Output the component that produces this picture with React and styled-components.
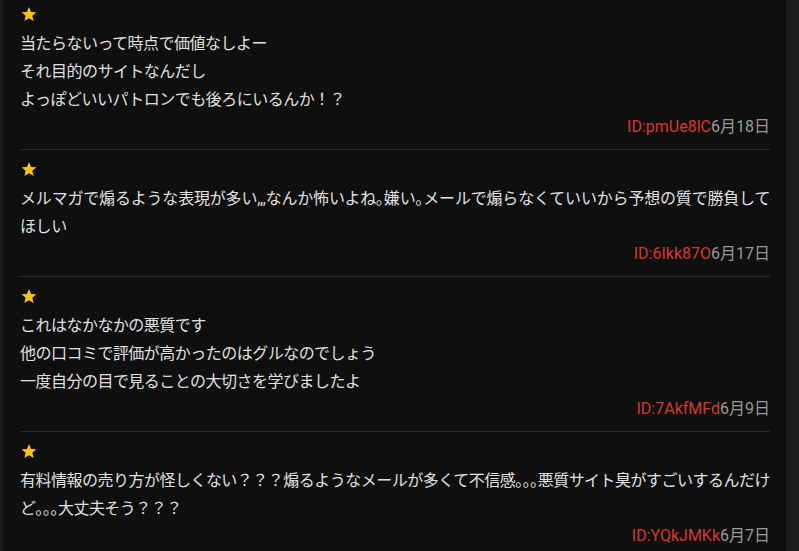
import React from 'react';
import styled, { createGlobalStyle } from 'styled-components';

const GlobalStyle = createGlobalStyle`
  html, body {
    margin: 0;
    padding: 0;
    background: #0f0f0f;
  }
  body {
    font-family: Roboto, "Noto Sans CJK JP", sans-serif;
  }
`;

const Page = styled.div`
  display: flex;
  width: 799px;
  height: 551px;
  overflow: hidden;
  background: #0f0f0f;
`;

const Rail = styled.div`
  flex: 0 0 ${p => p.width}px;
  background: ${p => p.color};
`;

const Panel = styled.div`
  flex: 1;
  padding: 0 16px 0 17px;
  background: #0f0f0f;
`;

const Review = styled.div`
  padding: 9px 0 9px;
  border-bottom: 1px solid #2a2a2a;

  &:first-child {
    padding-top: 4px;
  }
`;

const Stars = styled.div`
  height: 20px;
  display: flex;
  align-items: center;
  padding-left: 1px;
`;

const Body = styled.p`
  margin: 6px 0 0;
  font-size: 16px;
  line-height: 28px;
  letter-spacing: ${p => p.$spacing || -0.52}px;
  text-align: justify;
  color: #e0e0e0;
  white-space: pre-line;
`;

const Meta = styled.div`
  text-align: right;
  font-size: 16px;
  line-height: 26px;
  color: #9a9a9a;
`;

const Id = styled.span`
  color: #d8372c;
`;

const Star = () => (
  <svg width="16" height="16" viewBox="0 0 24 24">
    <path
      fill="#ffc20e"
      d="M12 1.5l3.1 7.4 8 .6-6.1 5.2 1.9 7.8L12 18.3l-6.9 4.2 1.9-7.8L.9 9.5l8-.6z"
    />
  </svg>
);

const reviews = [
  {
    text: '当たらないって時点で価値なしよー\nそれ目的のサイトなんだし\nよっぽどいいパトロンでも後ろにいるんか！？',
    id: 'ID:pmUe8lC',
    date: '6月18日'
  },
  {
    text: 'メルマガで煽るような表現が多い,,,なんか怖いよね｡嫌い｡メールで煽らなくていいから予想の質で勝負してほしい',
    id: 'ID:6Ikk87O',
    date: '6月17日',
    spacing: -0.42
  },
  {
    text: 'これはなかなかの悪質です\n他の口コミで評価が高かったのはグルなのでしょう\n一度自分の目で見ることの大切さを学びましたよ',
    id: 'ID:7AkfMFd',
    date: '6月9日'
  },
  {
    text: '有料情報の売り方が怪しくない？？？煽るようなメールが多くて不信感｡｡｡悪質サイト臭がすごいするんだけど｡｡｡大丈夫そう？？？',
    id: 'ID:YQkJMKk',
    date: '6月7日'
  }
];

export default function App() {
  return (
    <Page>
      <GlobalStyle />
      <Rail width={3} color="#1a1a1a" />
      <Panel>
        {reviews.map(r => (
          <Review key={r.id}>
            <Stars>
              <Star />
            </Stars>
            <Body $spacing={r.spacing}>{r.text}</Body>
            <Meta>
              <Id>{r.id}</Id>
              {r.date}
            </Meta>
          </Review>
        ))}
      </Panel>
      <Rail width={13} color="#1c1c1c" />
    </Page>
  );
}
